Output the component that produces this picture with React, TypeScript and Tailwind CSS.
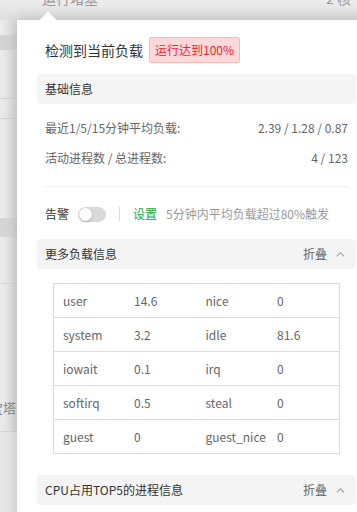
import type { ReactNode } from "react";

const font = { fontFamily: '"Noto Sans CJK SC", "Noto Sans", sans-serif' };

const loadRows: Array<[string, string, string, string]> = [
  ["user", "14.6", "nice", "0"],
  ["system", "3.2", "idle", "81.6"],
  ["iowait", "0.1", "irq", "0"],
  ["softirq", "0.5", "steal", "0"],
  ["guest", "0", "guest_nice", "0"]
];

const Chevron = () => (
  <svg width="11" height="11" viewBox="0 0 12 12" className="text-[#999]">
    <polyline points="2,8 6,4 10,8" fill="none" stroke="currentColor" strokeWidth="1.1" />
  </svg>
);

const SectionBar = ({ title, folding }: { title: string; folding?: boolean }) => (
  <div className="flex h-[30px] items-center justify-between rounded-[4px] bg-[#f4f4f4] px-2 text-[12px] text-[#333]">
    <span>{title}</span>
    {folding ? (
      <span className="flex items-center gap-[8px] pr-[2px] text-[#666]">
        折叠
        <Chevron />
      </span>
    ) : null}
  </div>
);

const InfoRow = ({ label, children }: { label: string; children: ReactNode }) => (
  <div className="flex h-[30px] items-center justify-between px-2 text-[12px] text-[#666]">
    <span>{label}</span>
    <span>{children}</span>
  </div>
);

export default function App() {
  return (
    <div className="relative h-[512px] w-[357px] overflow-hidden bg-[#e6e6e6]" style={font}>
      {/* page behind the popover */}
      <div className="flex h-[20px] items-start justify-between bg-gradient-to-b from-[#ececec] to-[#dedede] pl-[42px] pr-[6px]">
        <span className="-mt-[12px] text-[14px] text-[#999]">运行堵塞</span>
        <span className="-mt-[12px] text-[14px] text-[#999]">2 核</span>
      </div>
      <div className="flex w-[17px] flex-col bg-gradient-to-r from-[#ececec] to-[#d9d9d9]">
        <div className="h-[15px]" />
        <div className="h-[15px] bg-[#d4d4d4]" />
        <div className="h-[49px] border-b border-[#d2d2d2]" />
        <div className="h-[20px] border-b border-[#d2d2d2]" />
        <div className="h-[100px] border-b border-[#d6d6d6]" />
        <div className="h-[18px] bg-[#d6d6d6]" />
        <div className="h-[47px] border-b border-[#d6d6d6]" />
        <div className="flex h-[148px] items-center overflow-hidden border-b border-[#cfd3e6] pt-[60px]">
          <span className="-ml-[10px] mt-[40px] whitespace-nowrap text-[13px] text-[#888]">宝塔</span>
        </div>
      </div>

      {/* popover */}
      <div className="absolute left-[17px] top-[20px] w-[360px] bg-white px-5 pt-[17px] shadow-[0_0_12px_rgba(0,0,0,0.18)]">
        <div className="absolute -top-[6px] left-[25px] h-[12px] w-[12px] rotate-45 bg-white" />
        <div className="relative flex h-[26px] items-center gap-[6px] pl-2">
          <span className="text-[14px] text-[#333]">检测到当前负载</span>
          <span className="flex h-[26px] items-center rounded-[2px] border border-[#ffb8b8] bg-[#ffd9d9] px-[5px] text-[12px] text-[#f5222d]">
            运行达到100%
          </span>
        </div>

        <div className="mt-[11px] w-[319px]">
          <SectionBar title="基础信息" />
          <div className="mt-[9px]">
            <InfoRow label="最近1/5/15分钟平均负载:">2.39 / 1.28 / 0.87</InfoRow>
            <InfoRow label="活动进程数 / 总进程数:">4 / 123</InfoRow>
          </div>
          <div className="mx-2 mt-[13px] border-t border-[#eeeeee]" />

          <div className="mt-[13px] flex h-[28px] items-center px-2 text-[12px]">
            <span className="text-[#333]">告警</span>
            <span className="ml-[9px] flex h-[15px] w-[28px] items-center rounded-full bg-[#d9d9d9] px-[1px]">
              <span className="h-[13px] w-[13px] rounded-full bg-white shadow-[0_1px_2px_rgba(0,0,0,0.25)]" />
            </span>
            <span className="ml-[13px] h-[14px] border-l border-[#dddddd]" />
            <span className="ml-[13px] text-[#20a53a]">设置</span>
            <span className="ml-[9px] text-[#999]">5分钟内平均负载超过80%触发</span>
          </div>

          <div className="mt-[11px]">
            <SectionBar title="更多负载信息" folding />
          </div>

          <div className="mx-4 mt-[14px]">
            <table className="w-full table-fixed border-collapse border border-[#dddddd] text-[12px] text-[#666]">
              <tbody>
                {loadRows.map((row) => (
                  <tr key={row[0]} className="h-[34px] border-b border-[#dddddd]">
                    {row.map((cell, i) => (
                      <td key={i} className="px-[9px]">
                        {cell}
                      </td>
                    ))}
                  </tr>
                ))}
              </tbody>
            </table>
          </div>

          <div className="mt-[21px]">
            <SectionBar title="CPU占用TOP5的进程信息" folding />
          </div>
          <div className="h-[20px]" />
        </div>
      </div>
    </div>
  );
}
